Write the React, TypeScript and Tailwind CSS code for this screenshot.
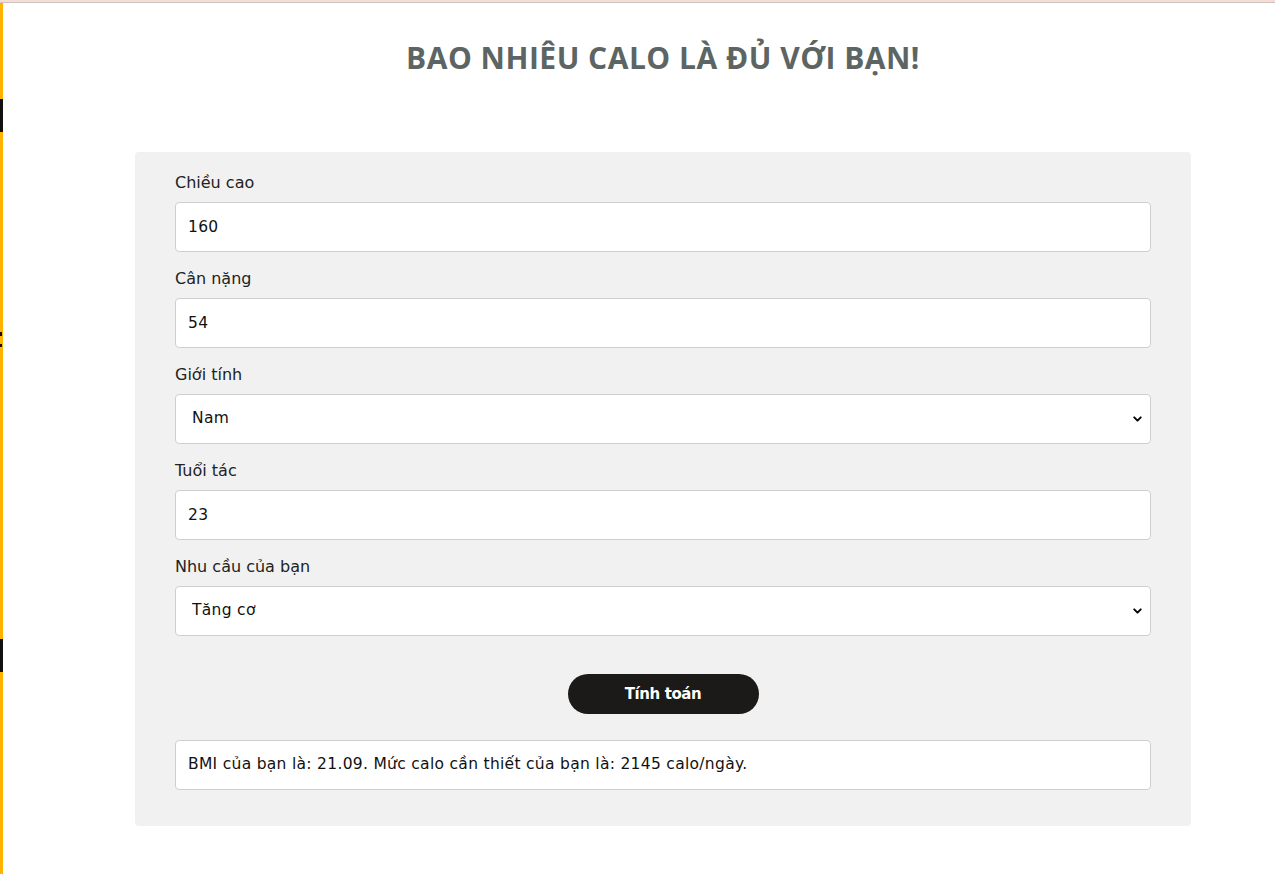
import { ChevronDown } from "lucide-react";

const fields = [
  { label: "Chiều cao", value: "160", type: "input" },
  { label: "Cân nặng", value: "54", type: "input" },
  { label: "Giới tính", value: "Nam", type: "select", options: ["Nam", "Nữ"] },
  { label: "Tuổi tác", value: "23", type: "input" },
  { label: "Nhu cầu của bạn", value: "Tăng cơ", type: "select", options: ["Giảm cân", "Giữ cân", "Tăng cơ"] },
];

const Field = ({ field }: { field: (typeof fields)[number] }) => (
  <div className="flex flex-col">
    <label className="text-[16px] leading-6 text-[#222] mb-[7px]">{field.label}</label>
    {field.type === "input" ? (
      <input
        defaultValue={field.value}
        className="h-[50px] w-full rounded-[4px] border border-[#cfcfcf] bg-white px-3 text-[15.5px] tracking-[0.3px] text-[#111] outline-none"
      />
    ) : (
      <div className="relative">
        <select
          defaultValue={field.value}
          className="h-[50px] w-full appearance-none rounded-[4px] border border-[#cfcfcf] bg-white pl-4 text-[15.5px] tracking-[0.3px] text-[#111] outline-none"
        >
          {field.options?.map((o) => (
            <option key={o}>{o}</option>
          ))}
        </select>
        <ChevronDown className="pointer-events-none absolute right-[7px] top-1/2 h-[13px] w-[13px] -translate-y-1/2 text-black" strokeWidth={3.5} />
      </div>
    )}
  </div>
);

export default function App() {
  return (
    <div className="min-h-[874px] bg-white" style={{ fontFamily: "'DejaVu Sans', 'Noto Sans', sans-serif" }}>
      <div className="h-[3px] bg-[#f9dcd3] border-b border-[#c9c4c2]" />
      <div className="flex">
        <div className="flex w-[3px] flex-col bg-[#ffb300] min-h-[871px]">
          <div className="h-[96px]" />
          <div className="h-[33px] bg-[#111]" />
          <div className="h-[200px]" />
          <div className="h-[4px] w-[2px] bg-[#111]" />
          <div className="h-[8px]" />
          <div className="h-[3px] w-[2px] bg-[#111]" />
          <div className="h-[292px]" />
          <div className="h-[33px] bg-[#111]" />
        </div>
        <main className="flex-1 flex flex-col items-center pl-[48px]">
          <h1
            className="mt-[33px] text-[30px] font-bold tracking-[0.5px] text-[#5c6563] leading-[44px]"
            style={{ fontFamily: "'Open Sans', sans-serif" }}
          >
            BAO NHIÊU CALO LÀ ĐỦ VỚI BẠN!
          </h1>
          <div className="mt-[72px] w-[1056px] rounded-[4px] bg-[#f1f1f1] px-[40px] pt-[19px] pb-[36px]">
            <div className="flex flex-col gap-[15px]">
              {fields.map((f) => (
                <Field key={f.label} field={f} />
              ))}
            </div>
            <div className="flex justify-center mt-[38px]">
              <button className="h-[40px] w-[191px] rounded-full bg-[#1c1a19] text-[15px] tracking-[-0.4px] font-bold text-white">
                Tính toán
              </button>
            </div>
            <div className="mt-[26px] flex h-[50px] items-center rounded-[4px] border border-[#cfcfcf] bg-white px-3 text-[15.5px] tracking-[0.3px] text-[#111]">
              BMI của bạn là: 21.09. Mức calo cần thiết của bạn là: 2145 calo/ngày.
            </div>
          </div>
        </main>
      </div>
    </div>
  );
}
